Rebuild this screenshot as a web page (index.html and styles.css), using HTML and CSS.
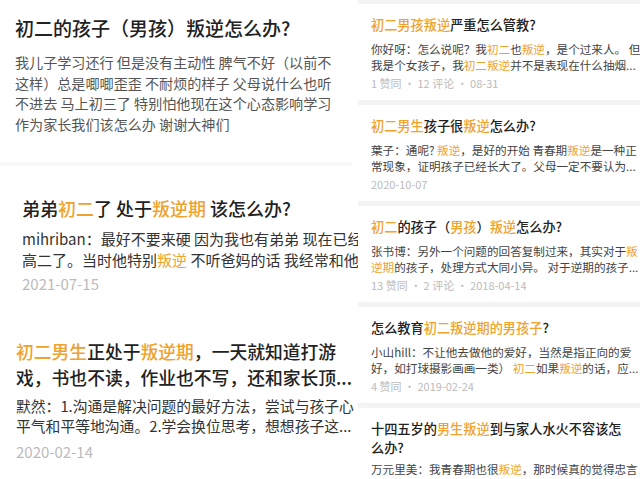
FILE: index.html
```html
<!DOCTYPE html>
<html lang="zh">
<head>
<meta charset="utf-8">
<link rel="stylesheet" href="styles.css">
</head>
<body>
<div class="page">
  <div class="left">
    <section class="q1">
      <h1 class="q1-title">初二的孩子（男孩）叛逆怎么办?</h1>
      <div class="q1-body">
        <div class="ln">我儿子学习还行 但是没有主动性 脾气不好（以前不</div>
        <div class="ln">这样）总是唧唧歪歪 不耐烦的样子 父母说什么也听</div>
        <div class="ln">不进去 马上初三了 特别怕他现在这个心态影响学习</div>
        <div class="ln">作为家长我们该怎么办 谢谢大神们</div>
      </div>
    </section>
    <div class="sep"></div>
    <section class="q2">
      <h2 class="q2-title">弟弟<em>初二</em>了 处于<em>叛逆期</em> 该怎么办?</h2>
      <div class="q2-body">
        <div class="ln">mihriban：最好不要来硬 因为我也有弟弟 现在已经</div>
        <div class="ln">高二了。当时他特别<em>叛逆</em> 不听爸妈的话 我经常和他</div>
      </div>
      <div class="q2-date">2021-07-15</div>
    </section>
    <section class="q3">
      <h2 class="q3-title">
        <div class="ln"><em>初二男生</em>正处于<em>叛逆期</em>，一天就知道打游</div>
        <div class="ln">戏，书也不读，作业也不写，还和家长顶...</div>
      </h2>
      <div class="q3-body">
        <div class="ln">默然：1.沟通是解决问题的最好方法，尝试与孩子心</div>
        <div class="ln">平气和平等地沟通。2.学会换位思考，想想孩子这...</div>
      </div>
      <div class="q3-date">2020-02-14</div>
    </section>
  </div>
  <div class="right">
    <article class="item">
      <h3 class="item-title"><em>初二男孩叛逆</em>严重怎么管教?</h3>
      <div class="item-body">
        <div class="ln">你好呀：怎么说呢？我<em>初二</em>也<em>叛逆</em>，是个过来人。 但</div>
        <div class="ln">我是个女孩子，我<em>初二叛逆</em>并不是表现在什么抽烟...</div>
      </div>
      <div class="item-meta">1 赞同 · 12 评论 · 08-31</div>
    </article>
    <article class="item">
      <h3 class="item-title"><em>初二男生</em>孩子很<em>叛逆</em>怎么办?</h3>
      <div class="item-body">
        <div class="ln">葉子：通呢? <em>叛逆</em>，是好的开始 青春期<em>叛逆</em>是一种正</div>
        <div class="ln">常现象，证明孩子已经长大了。父母一定不要认为...</div>
      </div>
      <div class="item-meta">2020-10-07</div>
    </article>
    <article class="item">
      <h3 class="item-title"><em>初二</em>的孩子（<em>男孩</em>）<em>叛逆</em>怎么办?</h3>
      <div class="item-body">
        <div class="ln">张书博：另外一个问题的回答复制过来，其实对于<em>叛</em></div>
        <div class="ln"><em>逆期</em>的孩子，处理方式大同小异。 对于逆期的孩子...</div>
      </div>
      <div class="item-meta">13 赞同 · 2 评论 · 2018-04-14</div>
    </article>
    <article class="item">
      <h3 class="item-title">怎么教育<em>初二叛逆期的男孩子</em>?</h3>
      <div class="item-body">
        <div class="ln">小山hill：不让他去做他的爱好，当然是指正向的爱</div>
        <div class="ln">好，如打球摄影画画一类） <em>初二</em>如果<em>叛逆</em>的话，应...</div>
      </div>
      <div class="item-meta">4 赞同 · 2019-02-24</div>
    </article>
    <article class="item last">
      <h3 class="item-title">
        <div class="ln">十四五岁的<em>男生叛逆</em>到与家人水火不容该怎</div>
        <div class="ln">么办?</div>
      </h3>
      <div class="item-body">
        <div class="ln">万元里美：我青春期也很<em>叛逆</em>，那时候真的觉得忠言</div>
      </div>
    </article>
  </div>
</div>
</body>
</html>
```

FILE: styles.css
```css
* { box-sizing: border-box; }
html, body {
  margin: 0;
  padding: 0;
  width: 640px;
  height: 479px;
  overflow: hidden;
  background: #ffffff;
  font-family: "Noto Sans CJK SC", "Noto Sans", "Liberation Sans", sans-serif;
}
em { font-style: normal; color: #f0a22e; }
h1, h2, h3 { margin: 0; }
.ln { white-space: nowrap; }

.page {
  display: flex;
  width: 640px;
  height: 479px;
  overflow: hidden;
}

/* left panel */
.left {
  width: 358px;
  flex: none;
  overflow: hidden;
  background: #fff;
}
.q1 { padding: 16px 0 28px 15px; }
.q1-title {
  font-size: 19px;
  line-height: 24px;
  font-weight: 500;
  color: #222;
  white-space: nowrap;
}
.q1-body {
  margin-top: 12px;
  font-size: 14.1px;
  line-height: 20.5px;
  color: #555;
}
.sep {
  height: 4px;
  width: 352px;
  background: #f8f8f8;
}
.q2 { padding: 30px 0 0 22px; }
.q2-title {
  font-size: 18px;
  line-height: 24px;
  font-weight: 500;
  color: #222;
  white-space: nowrap;
}
.q2-body {
  margin-top: 8px;
  font-size: 15px;
  line-height: 21px;
  color: #333;
}
.q2-date {
  margin-top: 4px;
  font-size: 15px;
  line-height: 20px;
  color: #bbb;
}
.q3 { padding: 44px 0 0 16px; }
.q3-title {
  font-size: 17.8px;
  line-height: 26px;
  font-weight: 500;
  color: #222;
}
.q3-body {
  margin-top: 6px;
  font-size: 14.8px;
  line-height: 20px;
  color: #333;
}
.q3-date {
  margin-top: 6px;
  font-size: 15px;
  line-height: 20px;
  color: #bbb;
}

/* right panel */
.right {
  flex: 1;
  background: #f4f4f4;
  padding-top: 4px;
  display: flex;
  flex-direction: column;
  gap: 5px;
  overflow: hidden;
}
.item {
  background: #fff;
  padding: 12px 0 10px 13px;
  height: 96px;
  flex: none;
}
.item.last { height: auto; flex: 1; padding-top: 11px; }
.item-title {
  font-size: 13.2px;
  line-height: 18px;
  font-weight: 500;
  color: #222;
  white-space: nowrap;
}
.item.last .item-title { line-height: 19px; }
.item.last .item-body { margin-top: 5px; }
.item-body {
  margin-top: 8px;
  font-size: 11.6px;
  line-height: 15.5px;
  color: #444;
}
.item-meta {
  margin-top: 3px;
  font-size: 11px;
  line-height: 14px;
  color: #bbb;
}
```
